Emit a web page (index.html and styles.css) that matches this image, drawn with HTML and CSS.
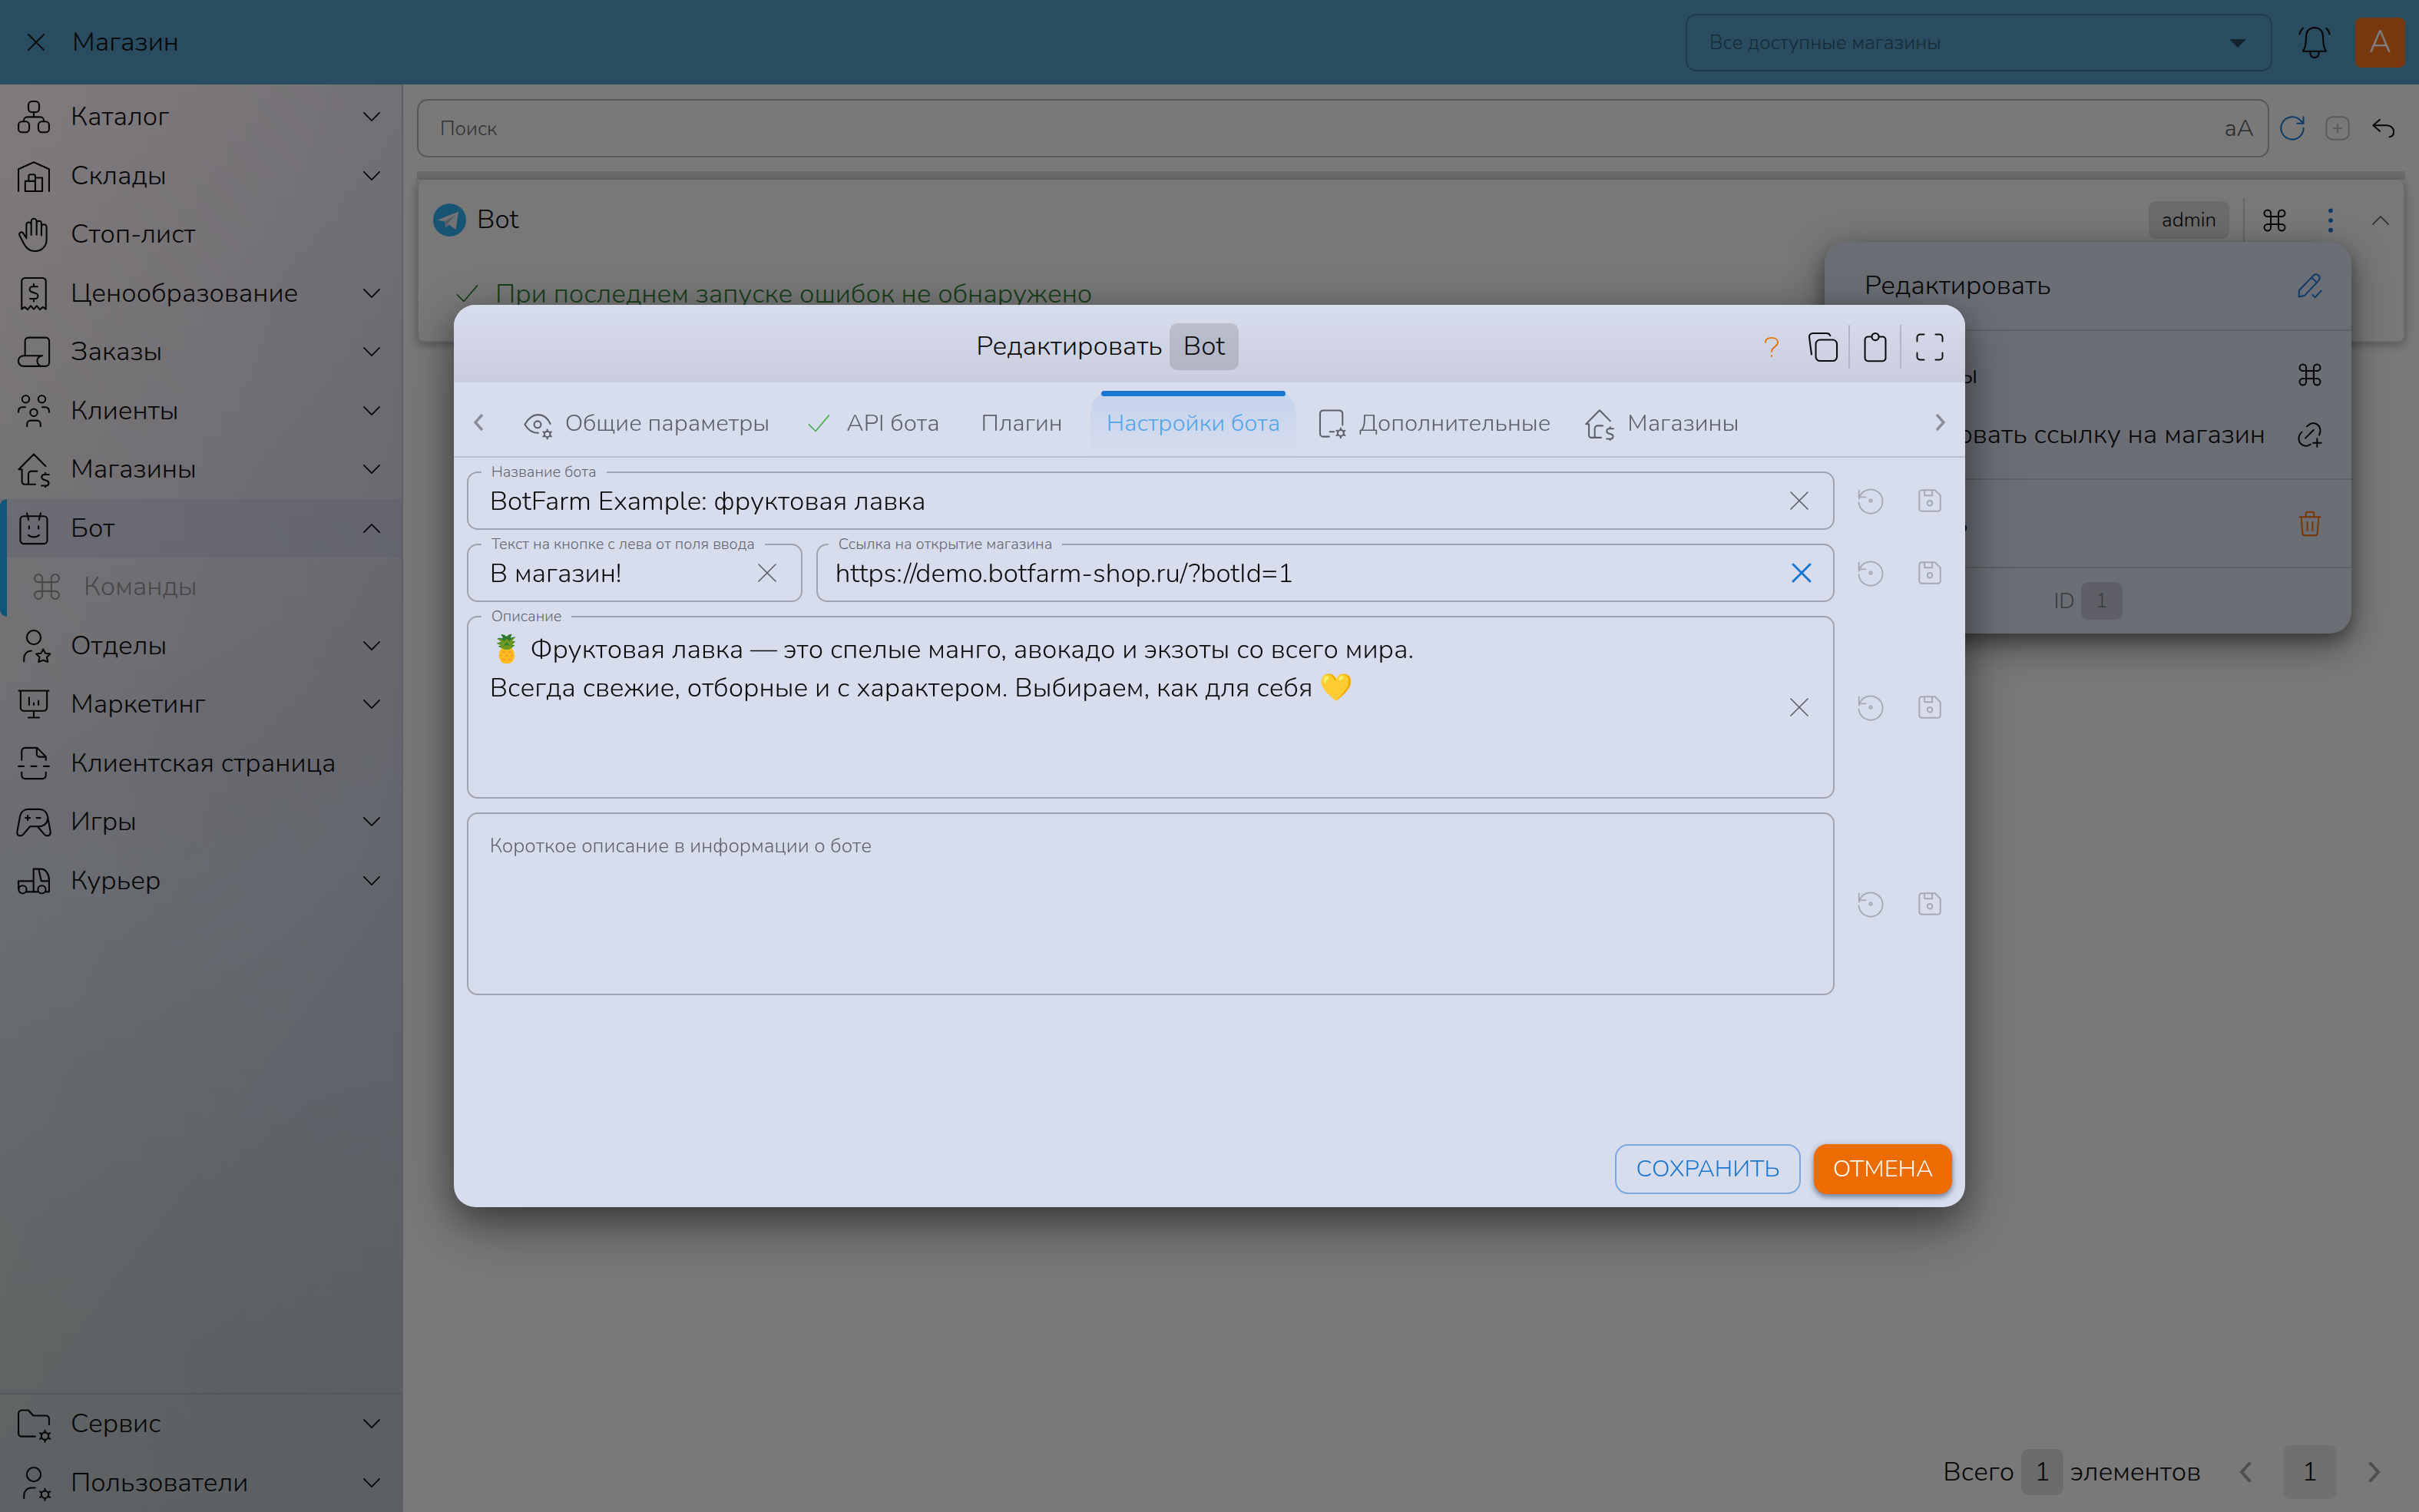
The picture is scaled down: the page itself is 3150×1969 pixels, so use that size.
FILE: index.html
```html
<!DOCTYPE html>
<html lang="ru">
<head>
  <title>Магазин</title>
  <meta charset="utf-8">
  <meta name="viewport" content="width=device-width, initial-scale=1.0">
  <link rel="stylesheet" href="styles.css">
</head>
<body>
  <svg class="sprite" aria-hidden="true">
    <symbol id="i-close" viewBox="0 0 24 24"><path d="M1 1l22 22M23 1L1 23"/></symbol>
    <symbol id="i-down" viewBox="0 0 24 24"><path d="M1 6.500l11 11 11-11"/></symbol>
    <symbol id="i-up" viewBox="0 0 24 24"><path d="M1 17.500l11-11 11 11"/></symbol>
    <symbol id="i-left" viewBox="0 0 24 24"><path d="M17 2L8 12l9 10"/></symbol>
    <symbol id="i-right" viewBox="0 0 24 24"><path d="M7 2l9 10-9 10"/></symbol>
    <symbol id="i-check" viewBox="0 0 24 24"><path d="M4 12.500l5.500 5.500L20.500 5"/></symbol>
    <symbol id="i-cmd" viewBox="0 0 24 24"><path d="M8.300 8.300V5.100a3.200 3.200 0 1 0-3.200 3.200h13.800a3.200 3.200 0 1 0-3.200-3.200v13.800a3.200 3.200 0 1 0 3.200-3.200H5.100a3.200 3.200 0 1 0 3.200 3.200z"/></symbol>
    <symbol id="i-catalog" viewBox="0 0 24 24"><rect x="8" y=".6" width="8" height="8" rx="2.600"/><rect x=".6" y="15.600" width="8" height="8" rx="2.600"/><rect x="15.400" y="15.600" width="8" height="8" rx="2.600"/><path d="M12 8.600v3.600M4.600 15.600v-.9a2.500 2.500 0 0 1 2.500-2.500h9.800a2.500 2.500 0 0 1 2.500 2.500v.9"/></symbol>
    <symbol id="i-warehouse" viewBox="0 0 24 24"><path d="M.6 23.400V7L12 1.900 23.400 7v16.400M5.600 23.400v-7.500h7.500M8.200 15.900v-3.700a1.200 1.200 0 0 1 1.200-1.200h2.500a1.200 1.200 0 0 1 1.200 1.200v11.200M13.100 13.400h5.200v10H5.600"/></symbol>
    <symbol id="i-hand" viewBox="0 0 24 24"><path d="M6.500 15V4.900a1.800 1.800 0 0 1 3.600 0v7.600V2.400a2 2 0 0 1 4 0v10V3.900a1.800 1.800 0 0 1 3.600 0v9V6.600a1.900 1.900 0 0 1 3.800 0v9.600c0 4.800-3.600 8.400-8.500 8.400-5.600 0-7.800-4-10.100-8.900L1.400 12.800c-.7-1.700.9-2.900 2.500-1.900z"/></symbol>
    <symbol id="i-price" viewBox="0 0 24 24"><path d="M3 23.800V3.100A2.500 2.500 0 0 1 5.500.6h13A2.500 2.500 0 0 1 21 3.100v20.700l-2.200-1.600-2.300 1.900-2.200-2.800-2.300 2.500-2.300-2.500-2.200 2.800-2.300-1.900zM14.800 7h-3.500a2 2 0 0 0-.7 4l2.800 1a2 2 0 0 1-.7 4H9.200M12 5v2M12 16v2"/></symbol>
    <symbol id="i-orders" viewBox="0 0 24 24"><path d="M5.500 15V4a2.500 2.500 0 0 1 2.500-2.500h13A2.500 2.500 0 0 1 23.500 4v16a2.800 2.800 0 0 1-2.800 2.800H4.400a3.900 3.900 0 0 1 0-7.800h14a3.900 3.900 0 0 0 0 7.800"/></symbol>
    <symbol id="i-clients" viewBox="0 0 24 24"><circle cx="6" cy="3.300" r="2.700"/><circle cx="18" cy="3.300" r="2.700"/><circle cx="12" cy="13.300" r="2.700"/><path d="M.6 13v-1a2.700 2.700 0 0 1 2.700-2.700h2.400M23.400 13v-1a2.700 2.700 0 0 0-2.700-2.700h-2.400M7 23.500v-1.800a2.500 2.500 0 0 1 2.500-2.500h5a2.500 2.500 0 0 1 2.500 2.500v1.800"/></symbol>
    <symbol id="i-shop" viewBox="0 0 24 24"><path d="M20.800 9.700L12 .8.800 12.100h2.400v9.200a2 2 0 0 0 2 2h8M8 23.300v-7.500a2.300 2.300 0 0 1 2.300-2.300h4.200M23.300 16h-3.500a1.900 1.900 0 0 0-.6 3.700l2.800 1a1.900 1.900 0 0 1-.6 3.600h-3.600M20.600 14.700V16M20.600 24.300v.9"/></symbol>
    <symbol id="i-bot" viewBox="0 0 24 24"><rect x="2" y="3" width="20" height="20.500" rx="2.500"/><path d="M6.900.7l1.200 5M17.100.7l-1.200 5M8.500 10.500v1.800M15.500 10.500v1.800M8 17c2 2 6 2 8 0"/></symbol>
    <symbol id="i-dept" viewBox="0 0 24 24"><circle cx="12" cy="5.800" r="5.200"/><path d="M4.700 23.500v-2c0-3.300 2.400-5.800 5.500-5.800M19 14.500l1.600 3.100 3.600.4-2.500 2.500.7 3.500-3.400-1.300-3.400 1.300.7-3.500-2.500-2.500 3.600-.4z"/></symbol>
    <symbol id="i-marketing" viewBox="0 0 24 24"><path d="M.8 2h22.400M2.200 2v12.500a2.500 2.500 0 0 0 2.500 2.500h14.600a2.500 2.500 0 0 0 2.500-2.500V2M12 17v5M8 22h8M8.500 7v5.500M12 11.200v1.300M15.500 9.500v3"/></symbol>
    <symbol id="i-page" viewBox="0 0 24 24"><path d="M3 9.500V3A2.500 2.500 0 0 1 5.500.5h9L21 7v2.500M14.200.5v4.700a2 2 0 0 0 2 2H21M3 18.800v2A2.500 2.500 0 0 0 5.500 23.500h13a2.500 2.500 0 0 0 2.500-2.700v-2M.6 14.200h4M10 14.200h4M19.400 14.200h4"/></symbol>
    <symbol id="i-games" viewBox="0 0 24 24"><path d="M7.800 2.800h8.400c3 0 5.400 1.900 6 5l2.100 11.300c.7 3.500-2.500 4.200-4.400 2.500l-5.100-6H9.200l-5.100 6c-1.900 1.700-5.100 1-4.400-2.500L1.800 7.800c.6-3.100 3-5 6-5zM14.800 15.600c4.500 0 7.200-2 7.600-6M5.800 9.200h3.400M7.500 7.500v3.400M14 9.200h3"/></symbol>
    <symbol id="i-courier" viewBox="0 0 24 24"><circle cx="3.700" cy="18.500" r="2.900"/><circle cx="18" cy="18.500" r="2.900"/><path d="M.6 18V12.200h11.200M11.800 20.200V3.200h5.500c3.700 0 6.100 4 6.100 8.500v8.500h-2.900M6.700 20.200H15M15.600 3.300l2 8.900h5.700"/></symbol>
    <symbol id="i-folder" viewBox="0 0 24 24"><path d="M13 21.500H3A2.400 2.400 0 0 1 .6 19.100V4.400A2.400 2.400 0 0 1 3 2h5l3.600 4h9.500a2.300 2.300 0 0 1 2.300 2.300v4.200"/><circle cx="20.300" cy="21.200" r="2.700"/><path d="M20.300 17v1.500M20.300 24v1.500M16.600 19l1.300.8M22.700 22.500l1.400.8M24.100 19l-1.400.8M17.900 22.500l-1.300.8"/></symbol>
    <symbol id="i-users" viewBox="0 0 24 24"><circle cx="12" cy="5.800" r="5.200"/><path d="M4.700 23.500v-2c0-3.300 2.400-5.800 5.500-5.800H13"/><circle cx="20.300" cy="20.700" r="2.700"/><path d="M20.300 16.500V18M20.300 23.500V25M16.600 18.500l1.300.8M22.700 22l1.400.8M24.100 18.500l-1.400.8M17.900 22l-1.300.8"/></symbol>
    <symbol id="i-bell" viewBox="0 0 24 24"><path d="M12 1.200c-3.900 0-6.300 2.700-6.300 6.600 0 5-.5 8.400-2.300 10.900h17.200c-1.800-2.500-2.300-5.900-2.300-10.900 0-3.900-2.400-6.600-6.300-6.600zM8.800 18.900v1.400a3.200 3.200 0 0 0 6.400 0v-1.400M3.300 1.600C2 2.800 1.200 4.200.8 6M20.700 1.600c1.300 1.200 2.100 2.600 2.500 4.400"/></symbol>
    <symbol id="i-refresh" viewBox="0 0 24 24"><path d="M23 11.900A11 11 0 1 1 19.300 3.700l3.300 3M22.900 1v6.300h-6.300"/></symbol>
    <symbol id="i-plus" viewBox="0 0 24 24"><rect x="1" y="1" width="22" height="22" rx="6"/><path d="M12 8v8M8 12h8"/></symbol>
    <symbol id="i-undo" viewBox="0 0 24 24"><path d="M8 3L1 9l7 6M1.200 9h14.300a7 7 0 0 1 7 6.500c0 3-1.700 5-4.500 5.500"/></symbol>
    <symbol id="i-dots" viewBox="0 0 24 24"><circle cx="12" cy="2.500" r="1.400"/><circle cx="12" cy="12" r="1.400"/><circle cx="12" cy="21.500" r="1.400"/></symbol>
    <symbol id="i-pencil" viewBox="0 0 24 24"><path d="M1.500 16.500L15.500 2c3-3 8 1 5 5L7 21.500l-5.800 1.300zM13.500 4.200l5 4.500M14.500 21l2.500 2.500 6-6.500"/></symbol>
    <symbol id="i-link" viewBox="0 0 24 24"><path d="M9 4l2.500-2c5-3.500 11.500 1 10.500 7.500l-1 3M4 9.500c-5 5-3 11 1.500 13 2.500 1 5 .5 7-1M7.500 15.500l8-8M19 16v8M15 20h8"/></symbol>
    <symbol id="i-trash" viewBox="0 0 24 24"><path d="M2 5.500h20M8 5.500V2.300A1.800 1.800 0 0 1 9.800.5h4.400A1.800 1.800 0 0 1 16 2.300v3.200M3.500 5.500l1.200 15.800a2.300 2.300 0 0 0 2.300 2.200h10a2.300 2.300 0 0 0 2.300-2.200l1.200-15.800M9.500 10.500v8M14.500 10.500v8"/></symbol>
    <symbol id="i-help" viewBox="0 0 24 24"><path d="M4.500 6.500C4.500 2.500 8 .8 12 .8s7.500 2 7.500 5.700c0 5-7.500 5-7.500 11M12 22v1"/></symbol>
    <symbol id="i-copy" viewBox="0 0 24 24"><rect x="6" y="6" width="17.400" height="17.400" rx="3.500"/><path d="M2.500 18L.6 3.600A3 3 0 0 1 3.600.6h11.500a3 3 0 0 1 2.800 2"/></symbol>
    <symbol id="i-clip" viewBox="0 0 24 24"><path d="M9 3.500H6A2.500 2.500 0 0 0 3.500 6v15A2.500 2.500 0 0 0 6 23.500h12a2.500 2.500 0 0 0 2.500-2.500V6A2.500 2.500 0 0 0 18 3.500h-3"/><circle cx="12" cy="3.500" r="2.900"/></symbol>
    <symbol id="i-full" viewBox="0 0 24 24"><path d="M1 7V3.500A2.500 2.500 0 0 1 3.500 1H7M17 1h3.500A2.500 2.500 0 0 1 23 3.500V7M23 17v3.500a2.500 2.500 0 0 1-2.500 2.500H17M7 23H3.500A2.500 2.500 0 0 1 1 20.500V17"/></symbol>
    <symbol id="i-eye" viewBox="0 0 24 24"><path d="M12.500 19.500C7 19.500 3.500 16 1.500 12.500 4 8 7.500 4.500 12.500 4.500c4.500 0 8 3 10 7.500"/><circle cx="12" cy="12.500" r="2.800"/><circle cx="20" cy="20.500" r="2.400"/><path d="M20 16.700V18M20 23v1.300M16.700 18.600l1.100.7M22.200 21.700l1.100.7M23.300 18.600l-1.100.7M17.800 21.700l-1.100.7"/></symbol>
    <symbol id="i-extra" viewBox="0 0 24 24"><path d="M10 22.500H5A2.500 2.500 0 0 1 2.500 20V3.500A2.500 2.500 0 0 1 5 1h13.500A2.500 2.500 0 0 1 21 3.500V13M10.500 18.500h3.500"/><circle cx="19.500" cy="19.500" r="2.500"/><path d="M19.500 15.500V17M19.500 22v1.500M16 17.500l1.300.8M21.700 20.800l1.300.7M23 17.500l-1.300.8M17.300 20.800l-1.300.7"/></symbol>
    <symbol id="i-history" viewBox="0 0 24 24"><path d="M1.200 10.500A11 11 0 1 1 1 13.500M1.200 2.500v6.200h6.200M1.400 8.500L4 5"/><circle cx="12" cy="12" r="1.200"/></symbol>
    <symbol id="i-save" viewBox="0 0 24 24"><path d="M3.500 1h13.800L23 6.500v14a2.500 2.500 0 0 1-2.500 2.500h-17A2.500 2.500 0 0 1 1 20.500v-17A2.500 2.500 0 0 1 3.500 1zM6.500 1v5.500h8V1"/><circle cx="12" cy="14.500" r="2.600"/></symbol>
  </svg>

  <header class="topbar">
    <button class="topbar-close" aria-label="Закрыть"><svg class="icon s22"><use href="#i-close"/></svg></button>
    <h1>Магазин</h1>
    <div class="shop-select">
      <select aria-label="Магазин"><option>Все доступные магазины</option></select>
      <span class="caret"></span>
    </div>
    <button class="bell" aria-label="Уведомления"><svg class="icon s42"><use href="#i-bell"/></svg></button>
    <button class="avatar">A</button>
  </header>

  <div class="layout">
    <nav class="sidebar">
      <ul>
        <li><a href="#"><svg class="icon s42"><use href="#i-catalog"/></svg><span>Каталог</span><svg class="icon s22"><use href="#i-down"/></svg></a></li>
        <li><a href="#"><svg class="icon s42"><use href="#i-warehouse"/></svg><span>Склады</span><svg class="icon s22"><use href="#i-down"/></svg></a></li>
        <li><a href="#"><svg class="icon s42"><use href="#i-hand"/></svg><span>Стоп-лист</span></a></li>
        <li><a href="#"><svg class="icon s42"><use href="#i-price"/></svg><span>Ценообразование</span><svg class="icon s22"><use href="#i-down"/></svg></a></li>
        <li><a href="#"><svg class="icon s42"><use href="#i-orders"/></svg><span>Заказы</span><svg class="icon s22"><use href="#i-down"/></svg></a></li>
        <li><a href="#"><svg class="icon s42"><use href="#i-clients"/></svg><span>Клиенты</span><svg class="icon s22"><use href="#i-down"/></svg></a></li>
        <li><a href="#"><svg class="icon s42"><use href="#i-shop"/></svg><span>Магазины</span><svg class="icon s22"><use href="#i-down"/></svg></a></li>
        <li class="open">
          <a href="#" class="active"><svg class="icon s42"><use href="#i-bot"/></svg><span>Бот</span><svg class="icon s22"><use href="#i-up"/></svg></a>
          <a href="#" class="sub"><svg class="icon s38"><use href="#i-cmd"/></svg><span>Команды</span></a>
        </li>
        <li><a href="#"><svg class="icon s42"><use href="#i-dept"/></svg><span>Отделы</span><svg class="icon s22"><use href="#i-down"/></svg></a></li>
        <li><a href="#"><svg class="icon s42"><use href="#i-marketing"/></svg><span>Маркетинг</span><svg class="icon s22"><use href="#i-down"/></svg></a></li>
        <li><a href="#"><svg class="icon s42"><use href="#i-page"/></svg><span>Клиентская страница</span></a></li>
        <li><a href="#"><svg class="icon s42"><use href="#i-games"/></svg><span>Игры</span><svg class="icon s22"><use href="#i-down"/></svg></a></li>
        <li><a href="#"><svg class="icon s42"><use href="#i-courier"/></svg><span>Курьер</span><svg class="icon s22"><use href="#i-down"/></svg></a></li>
      </ul>
      <ul class="bottom">
        <li><a href="#"><svg class="icon s42"><use href="#i-folder"/></svg><span>Сервис</span><svg class="icon s22"><use href="#i-down"/></svg></a></li>
        <li><a href="#"><svg class="icon s42"><use href="#i-users"/></svg><span>Пользователи</span><svg class="icon s22"><use href="#i-down"/></svg></a></li>
      </ul>
    </nav>

    <main class="content">
      <div class="toolbar">
        <div class="search">
          <input type="search" placeholder="Поиск" aria-label="Поиск">
          <button class="case">aA</button>
        </div>
        <button class="tool blue" aria-label="Обновить"><svg class="icon s32"><use href="#i-refresh"/></svg></button>
        <button class="tool muted" aria-label="Добавить"><svg class="icon s32"><use href="#i-plus"/></svg></button>
        <button class="tool" aria-label="Назад"><svg class="icon s30"><use href="#i-undo"/></svg></button>
      </div>

      <div class="list">
        <article class="card">
          <div class="card-head">
            <svg class="telegram" viewBox="0 0 43 43" aria-hidden="true">
              <circle cx="21.500" cy="21.500" r="21.500" fill="#2fa9e8"/>
              <path d="M6 21.500L33 10.500 29.500 34l-9-6.500-4.500 4-1-8z" fill="#e4e6ea"/>
              <path d="M15 23.500l15-9.500-11 12-3 5.500z" fill="#a9b8c6"/>
            </svg>
            <span class="card-title">Bot</span>
            <span class="chip small">admin</span>
            <span class="card-sep"></span>
            <button class="cell wide" aria-label="Команды"><svg class="icon s32"><use href="#i-cmd"/></svg></button>
            <button class="cell blue dots" aria-label="Меню"><svg class="icon s32"><use href="#i-dots"/></svg></button>
            <button class="cell grey" aria-label="Свернуть"><svg class="icon s22"><use href="#i-up"/></svg></button>
          </div>
          <p class="status"><svg class="icon s38 thin"><use href="#i-check"/></svg>При последнем запуске ошибок не обнаружено</p>
        </article>
      </div>

      <div class="pager">
        <span>Всего</span><span class="chip">1</span><span>элементов</span>
        <div class="pages">
          <button class="cell thick" aria-label="Предыдущая"><svg class="icon s30"><use href="#i-left"/></svg></button>
          <button class="page">1</button>
          <button class="cell thick" aria-label="Следующая"><svg class="icon s30"><use href="#i-right"/></svg></button>
        </div>
      </div>
    </main>
  </div>

  <div class="menu">
    <div class="menu-group">
      <button class="menu-item">Редактировать<svg class="icon s32 blue"><use href="#i-pencil"/></svg></button>
    </div>
    <div class="menu-group">
      <button class="menu-item">Команды<svg class="icon s32"><use href="#i-cmd"/></svg></button>
      <button class="menu-item">Скопировать ссылку на магазин<svg class="icon s32"><use href="#i-link"/></svg></button>
    </div>
    <div class="menu-group">
      <button class="menu-item">Удалить<svg class="icon s32 orange"><use href="#i-trash"/></svg></button>
    </div>
    <div class="menu-foot">ID <span class="chip small">1</span></div>
  </div>

  <div class="backdrop">
    <section class="modal" role="dialog" aria-labelledby="modal-title">
      <header class="modal-head">
        <h2 id="modal-title">Редактировать <span class="chip">Bot</span></h2>
        <button class="orange" aria-label="Помощь"><svg class="icon s26"><use href="#i-help"/></svg></button>
        <button aria-label="Копировать"><svg class="icon s38"><use href="#i-copy"/></svg></button>
        <button aria-label="Вставить"><svg class="icon s38"><use href="#i-clip"/></svg></button>
        <button aria-label="На весь экран"><svg class="icon s36"><use href="#i-full"/></svg></button>
      </header>

      <div class="tabs">
        <button class="scroll" aria-label="Назад"><svg class="icon s24"><use href="#i-left"/></svg></button>
        <div class="tab-list" role="tablist">
          <button class="tab" role="tab"><svg class="icon s38"><use href="#i-eye"/></svg>Общие параметры</button>
          <button class="tab" role="tab"><svg class="icon s38 thin green"><use href="#i-check"/></svg>API бота</button>
          <button class="tab plain" role="tab">Плагин</button>
          <button class="tab plain selected" role="tab" aria-selected="true">Настройки бота</button>
          <button class="tab" role="tab"><svg class="icon s38"><use href="#i-extra"/></svg>Дополнительные</button>
          <button class="tab" role="tab"><svg class="icon s38"><use href="#i-shop"/></svg>Магазины</button>
        </div>
        <button class="scroll" aria-label="Вперёд"><svg class="icon s24"><use href="#i-right"/></svg></button>
      </div>

      <form class="form">
        <div class="row">
          <div class="field">
            <label for="name">Название бота</label>
            <input id="name" type="text" value="BotFarm Example: фруктовая лавка">
            <button type="button" class="clear" aria-label="Очистить"><svg class="icon s24"><use href="#i-close"/></svg></button>
          </div>
          <button type="button" class="side" aria-label="Вернуть"><svg class="icon s34"><use href="#i-history"/></svg></button>
          <button type="button" class="side" aria-label="Сохранить поле"><svg class="icon s30"><use href="#i-save"/></svg></button>
        </div>
        <div class="row">
          <div class="field short">
            <label for="btn-text">Текст на кнопке с лева от поля ввода</label>
            <input id="btn-text" type="text" value="В магазин!">
            <button type="button" class="clear" aria-label="Очистить"><svg class="icon s24"><use href="#i-close"/></svg></button>
          </div>
          <div class="field link">
            <label for="shop-url">Ссылка на открытие магазина</label>
            <input id="shop-url" type="text" value="https://demo.botfarm-shop.ru/?botId=1">
            <button type="button" class="clear blue" aria-label="Очистить"><svg class="icon s24"><use href="#i-close"/></svg></button>
          </div>
          <button type="button" class="side" aria-label="Вернуть"><svg class="icon s34"><use href="#i-history"/></svg></button>
          <button type="button" class="side" aria-label="Сохранить поле"><svg class="icon s30"><use href="#i-save"/></svg></button>
        </div>
        <div class="row">
          <div class="field">
            <label for="about">Описание</label>
            <textarea id="about" rows="4">🍍 Фруктовая лавка — это спелые манго, авокадо и экзоты со всего мира.
Всегда свежие, отборные и с характером. Выбираем, как для себя 💛</textarea>
            <button type="button" class="clear" aria-label="Очистить"><svg class="icon s24"><use href="#i-close"/></svg></button>
          </div>
          <button type="button" class="side" aria-label="Вернуть"><svg class="icon s34"><use href="#i-history"/></svg></button>
          <button type="button" class="side" aria-label="Сохранить поле"><svg class="icon s30"><use href="#i-save"/></svg></button>
        </div>
        <div class="row">
          <div class="field">
            <textarea rows="4" aria-label="Короткое описание" placeholder="Короткое описание в информации о боте"></textarea>
          </div>
          <button type="button" class="side" aria-label="Вернуть"><svg class="icon s34"><use href="#i-history"/></svg></button>
          <button type="button" class="side" aria-label="Сохранить поле"><svg class="icon s30"><use href="#i-save"/></svg></button>
        </div>
      </form>

      <footer class="actions">
        <button class="btn outlined">СОХРАНИТЬ</button>
        <button class="btn filled">ОТМЕНА</button>
      </footer>
    </section>
  </div>
</body>
</html>
```
FILE: styles.css
```css
* { box-sizing: border-box; }
body {
  margin: 0;
  height: 100vh;
  display: flex;
  flex-direction: column;
  overflow: hidden;
  background: #f2f2f2;
  color: #0c0c0c;
  font-family: Nunito, "Open Sans", "Noto Sans", sans-serif;
  font-size: 35px;
  font-weight: 300;
  line-height: 1.5;
}
h1, h2, p, ul { margin: 0; padding: 0; font-size: inherit; font-weight: inherit; list-style: none; }
button, input, textarea, select {
  margin: 0;
  padding: 0;
  border: none;
  outline: none;
  background: none;
  color: inherit;
  font: inherit;
}
a { color: inherit; text-decoration: none; }

/* icons */
.sprite { position: absolute; width: 0; height: 0; }
.icon { display: block; flex: none; overflow: visible; fill: none; stroke: currentColor; stroke-width: 1.2; stroke-linecap: round; stroke-linejoin: round; }
symbol { overflow: visible; }
.s22 { width: 22px; height: 22px; stroke-width: 1.9; }
.s24 { width: 24px; height: 24px; stroke-width: 1.6; }
.s26 { width: 26px; height: 26px; stroke-width: 1.7; }
.s30 { width: 30px; height: 30px; stroke-width: 1.6; }
.s32 { width: 32px; height: 32px; stroke-width: 1.5; }
.s34 { width: 34px; height: 34px; stroke-width: 1.3; }
.s36 { width: 36px; height: 36px; stroke-width: 1.3; }
.s38 { width: 38px; height: 38px; stroke-width: 1.3; }
.s42 { width: 42px; height: 42px; }
.icon.thin { stroke-width: 1.1; }
.blue { color: #1976d2; }
.orange { color: #ed6c02; }
.green { color: #4caf50; }
.muted { color: #b8b8b8; }
.grey { color: #666; }

.chip { display: inline-block; padding: 4px 17px; border-radius: 10px; background: #d6d6d6; }
.chip.small { padding: 5px 17px; border-radius: 9px; font-size: 26px; }

/* top bar */
.topbar {
  display: flex;
  align-items: center;
  height: 110px;
  flex: none;
  padding: 0 18px 0 36px;
  background: #5298c0;
}
.topbar h1 { flex: 1; padding-left: 36px; }
.shop-select { position: relative; width: 764px; }
.shop-select select {
  display: block;
  appearance: none;
  width: 100%;
  height: 75px;
  padding: 0 29px;
  border: 2px solid #3e7594;
  border-radius: 14px;
  color: #2f566c;
  font-size: 26px;
}
.caret { position: absolute; right: 34px; top: 33px; border: 11px solid transparent; border-top-color: #264658; border-bottom: none; }
.bell { margin: 0 32px 0 34px; }
.avatar { width: 65px; height: 65px; border-radius: 8px; background: #f06f1a; color: #fff; font-size: 40px; line-height: 65px; text-align: center; }

/* sidebar */
.layout { flex: 1; display: flex; min-height: 0; }
.sidebar {
  width: 525px;
  display: flex;
  flex-direction: column;
  justify-content: space-between;
  padding-top: 4px;
  border-right: 2px solid #bfbfcf;
  background:
    linear-gradient(105deg, rgba(160, 160, 190, 0) 42%, rgba(160, 160, 190, .04) 42.2%, rgba(160, 160, 190, .02) 100%),
    linear-gradient(150deg, rgba(140, 150, 190, 0) 42%, rgba(140, 150, 190, .04) 42.1%, rgba(140, 150, 190, 0) 70%),
    linear-gradient(125deg, rgba(140, 150, 190, 0) 68%, rgba(140, 150, 190, .05) 68.1%, rgba(140, 150, 190, 0) 90%),
    linear-gradient(90deg, rgba(150, 155, 190, 0), rgba(150, 155, 190, .22)),
    linear-gradient(180deg, #fff6fa, #eee8ee 26%, #e4e2e8 40%, #d9dee6 55%, #ccd4da 70%, #c2cac9 88%, #c0c8ca);
}
.sidebar a { display: flex; align-items: center; padding: 12px 28px 12px 23px; }
.sidebar a span { flex: 1; padding-left: 27px; }
.sidebar .open { position: relative; }
.sidebar .open::before { content: ""; position: absolute; left: 0; top: 0; bottom: 0; width: 9px; border-radius: 9px 0 0 9px; background: #1fabf4; }
.sidebar a.active { background: rgba(170, 185, 225, .32); }
.sidebar a.sub { padding-left: 42px; opacity: .38; }
.sidebar a.sub span { padding-left: 29px; }
.sidebar .bottom { border-top: 2px solid #a9b1b4; }

/* content */
.content { flex: 1; min-width: 0; display: flex; flex-direction: column; padding: 19px 18px 17px; }
.toolbar { display: flex; align-items: center; }
.search { flex: 1; display: flex; align-items: center; height: 76px; padding: 0 18px 0 28px; border: 2px solid #b0b0b0; border-radius: 14px; font-size: 26px; }
.search input { flex: 1; }
.search input::placeholder { color: #666; opacity: 1; }
.case { color: #555; font-size: 31px; }
.tool { width: 59px; display: flex; justify-content: center; }
.tool:last-child { padding-left: 2px; }

.list { flex: 1; margin-top: 18px; padding-top: 11px; background: linear-gradient(#dadada, #d0d0d0 11px, transparent 11px); }
.card {
  height: 212px;
  border: 2px solid #d4d4dc;
  border-top: none;
  border-radius: 9px;
  background: #f0f0f0;
  box-shadow: 0 3px 12px rgba(0, 0, 0, .3);
}
.card-head { display: flex; align-items: center; height: 105px; padding-left: 19px; }
.telegram { width: 43px; height: 43px; }
.card-title { flex: 1; padding-left: 14px; }
.card-sep { width: 2px; height: 58px; margin-left: 18px; background: #ccc; }
.cell { display: flex; align-items: center; justify-content: center; width: 68px; height: 70px; }
.cell.wide { width: 78px; }
.cell.grey { width: 61px; }
.dots svg { fill: currentColor; }
.status { display: flex; align-items: center; gap: 18px; padding: 18px 0 0 44px; color: #2e7d32; }

.pager { display: flex; align-items: center; justify-content: flex-end; gap: 9px; }
.pages { display: flex; gap: 9px; padding-left: 9px; }
.pages .cell { width: 80px; }
.page { min-width: 70px; height: 70px; border-radius: 9px; background: #e0e0e0; }
.thick { color: #9c9c9c; }
.thick svg { stroke-width: 3.2; stroke-linecap: butt; stroke-linejoin: miter; }

/* context menu */
.menu {
  position: absolute;
  top: 315px;
  right: 88px;
  width: 686px;
  border-radius: 28px;
  background: #d8dded;
  box-shadow: 0 14px 50px rgba(0, 0, 0, .4), 0 10px 20px rgba(0, 0, 0, .3);
}
.menu-group { padding: 18px 0 17px; border-bottom: 2px solid #bcc0ce; }
.menu-item { display: flex; align-items: center; justify-content: space-between; width: 100%; padding: 13px 38px 13px 52px; }
.menu-foot { display: flex; align-items: center; justify-content: center; gap: 8px; height: 85px; color: #74777f; font-size: 28px; }
.menu-foot .chip { padding: 5px 19px; background: #bfc1cf; }

/* edit dialog */
.backdrop { position: fixed; inset: 0; display: flex; align-items: center; justify-content: center; background: rgba(0, 0, 0, .5); }
.modal {
  display: flex;
  flex-direction: column;
  width: 62.5%;
  min-height: 1175px;
  border-radius: 28px;
  background: #d8dded;
  box-shadow: 0 24px 80px rgba(0, 0, 0, .35), 0 16px 40px rgba(0, 0, 0, .3);
  overflow: hidden;
}
.modal-head { display: flex; align-items: center; height: 101px; padding: 8px 9px 0 20px; background: linear-gradient(#d8dded, #c9cddd); }
.modal-head h2 { flex: 1; text-align: center; }
.modal-head .chip { padding: 4px 18px; background: rgba(0, 0, 0, .12); }
.modal-head button { display: flex; align-items: center; justify-content: center; width: 67px; height: 57px; }
.modal-head button:nth-of-type(n+3) { border-left: 2px solid #b2b6c5; }
.modal-head button:last-child { width: 76px; }

.tabs { display: flex; height: 98px; border-bottom: 2px solid #bbbfce; color: #5c606c; font-size: 31px; }
.scroll { display: flex; align-items: center; justify-content: center; width: 64px; padding-top: 8px; color: #888c9b; }
.scroll svg { stroke-width: 3.4; stroke-linecap: butt; stroke-linejoin: miter; }
.tab-list { flex: 1; display: flex; gap: 15px; padding: 11px 0 0 14px; }
.tab { display: flex; align-items: center; gap: 17px; padding: 0 18px 0 12px; }
.tab.plain { padding: 0 21px; }
.tab.selected { position: relative; border-radius: 28px 28px 0 0; background: linear-gradient(#c4d2ed, #d8dded); color: #53a5ec; }
.tab.selected::before { content: ""; position: absolute; top: 0; left: 14px; right: 14px; height: 7px; border-radius: 4px; background: #1976d2; }

.form { flex: 1; display: flex; flex-direction: column; gap: 18px; padding: 18px 8px 0 17px; }
.row { display: flex; align-items: center; }
.field { position: relative; flex: 1; display: flex; align-items: center; border: 2px solid #a0a4b2; border-radius: 14px; }
.field.short { flex: none; width: 437px; margin-right: 18px; }
.field label { position: absolute; left: 17px; top: -15px; padding: 0 13px; background: #d8dded; color: #60646f; font-size: 20px; line-height: 28px; }
.field.link label { left: 14px; }
.field input { flex: 1; min-width: 0; height: 72px; padding-left: 28px; }
.field.link input { padding-left: 23px; }
.field textarea { display: block; flex: 1; padding: 17px 0 17px 28px; line-height: 50px; resize: none; overflow: hidden; }
.field textarea::placeholder { color: #60646f; font-size: 26px; opacity: 1; }
.clear { margin-right: 32px; color: #5a5e69; }
.clear.blue { color: #1976d2; margin-right: 29px; }
.clear.blue svg { stroke-width: 3; }
.side { display: flex; align-items: center; justify-content: center; width: 77px; height: 70px; color: #a5a9b6; }
.field + .side { margin-left: 8px; }

.actions { display: flex; justify-content: flex-end; gap: 17px; padding: 17px; }
.btn { height: 65px; padding: 0 25px; border-radius: 17px; font-size: 31px; }
.outlined { border: 2px solid #7ba8e1; color: #1976d2; }
.filled { background: #ed6c02; color: #fff; box-shadow: 0 4px 6px rgba(60, 80, 110, .5), 0 2px 10px rgba(60, 80, 110, .3); }
```
